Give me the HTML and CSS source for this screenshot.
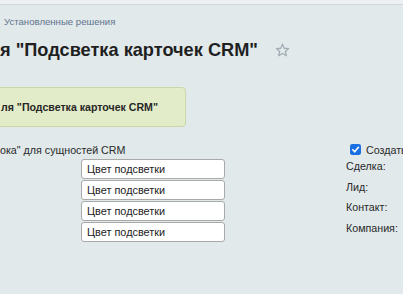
FILE: index.html
```html
<!DOCTYPE html>
<html lang="ru">
<head>
<meta charset="utf-8">
<link rel="stylesheet" href="styles.css">
</head>
<body>
<div class="topbar"></div>
<div class="crumbs"><a class="crumb">Установленные решения</a></div>
<div class="title-row">
  <h1 class="title">я "Подсветка карточек CRM"</h1>
  <svg class="star" viewBox="0 0 16 16" width="15" height="15"><path d="M8 1.3l1.9 4.3 4.6.4-3.5 3 1.1 4.6L8 11.2l-4.1 2.4 1.1-4.6-3.5-3 4.6-.4z" fill="none" stroke="#a3acb4" stroke-width="1.4" stroke-linejoin="round"/></svg>
</div>
<div class="banner">ля "Подсветка карточек CRM"</div>
<div class="form">
  <div class="left">
    <div class="caption">ока" для сущностей CRM</div>
    <div class="inputs">
      <div class="field">Цвет подсветки</div>
      <div class="field">Цвет подсветки</div>
      <div class="field">Цвет подсветки</div>
      <div class="field">Цвет подсветки</div>
    </div>
  </div>
  <div class="right">
    <div class="check-row">
      <svg class="check" viewBox="0 0 12 12" width="11" height="11"><rect x="0" y="0" width="12" height="12" rx="2.5" fill="#1a6fe3"/><path d="M3 6.3l2.1 2.2L9.2 3.6" fill="none" stroke="#fff" stroke-width="1.8" stroke-linecap="round" stroke-linejoin="round"/></svg>
      <span>Создать</span>
    </div>
    <div class="ent">Сделка:</div>
    <div class="ent">Лид:</div>
    <div class="ent">Контакт:</div>
    <div class="ent">Компания:</div>
  </div>
</div>
</body>
</html>
```
FILE: styles.css
```css
html, body {
  margin: 0;
  padding: 0;
}
body {
  width: 403px;
  height: 294px;
  overflow: hidden;
  background: #e1e9eb;
  font-family: "Liberation Sans", Arial, sans-serif;
  color: #222;
}
.topbar {
  height: 4px;
  background: #edf1f2;
  border-bottom: 1px solid #cfd7da;
}
.crumbs {
  padding: 9px 0 0 4px;
  height: 15px;
  line-height: 15px;
  font-size: 9.6px;
}
.crumb {
  color: #61748d;
}
.title-row {
  display: flex;
  align-items: center;
  gap: 17px;
  margin-top: 8px;
  height: 26px;
}
.title {
  margin: 0;
  font-size: 18.2px;
  font-weight: bold;
  line-height: 26px;
  color: #1f1f1f;
  white-space: nowrap;
}
.star {
  display: block;
  margin-top: 1px;
}
.banner {
  box-sizing: border-box;
  margin: 24px 0 0 -6px;
  width: 192px;
  height: 40px;
  padding-left: 6px;
  line-height: 38px;
  background: #e3ecc9;
  border: 1px solid #cbd7a6;
  border-radius: 4px;
  font-size: 10.6px;
  font-weight: bold;
  color: #262626;
  white-space: nowrap;
}
.form {
  display: flex;
  margin-top: 16px;
}
.left {
  width: 346px;
  flex-shrink: 0;
}
.caption {
  height: 14px;
  line-height: 14px;
  font-size: 10.7px;
  color: #2a2a2a;
  white-space: nowrap;
}
.inputs {
  display: flex;
  flex-direction: column;
  gap: 1px;
  margin: 2px 0 0 81px;
}
.field {
  box-sizing: border-box;
  width: 144px;
  height: 20px;
  padding-left: 5px;
  line-height: 18px;
  font-size: 10.9px;
  color: #222;
  background: #fff;
  border: 1px solid #a9a9a9;
  border-radius: 3px;
}
.right {
  font-size: 10.7px;
  color: #2a2a2a;
  white-space: nowrap;
}
.check-row {
  display: flex;
  align-items: center;
  gap: 5px;
  height: 13px;
  padding-left: 4px;
}
.check {
  display: block;
}
.ent {
  height: 20.6px;
  line-height: 20.6px;
}
```
